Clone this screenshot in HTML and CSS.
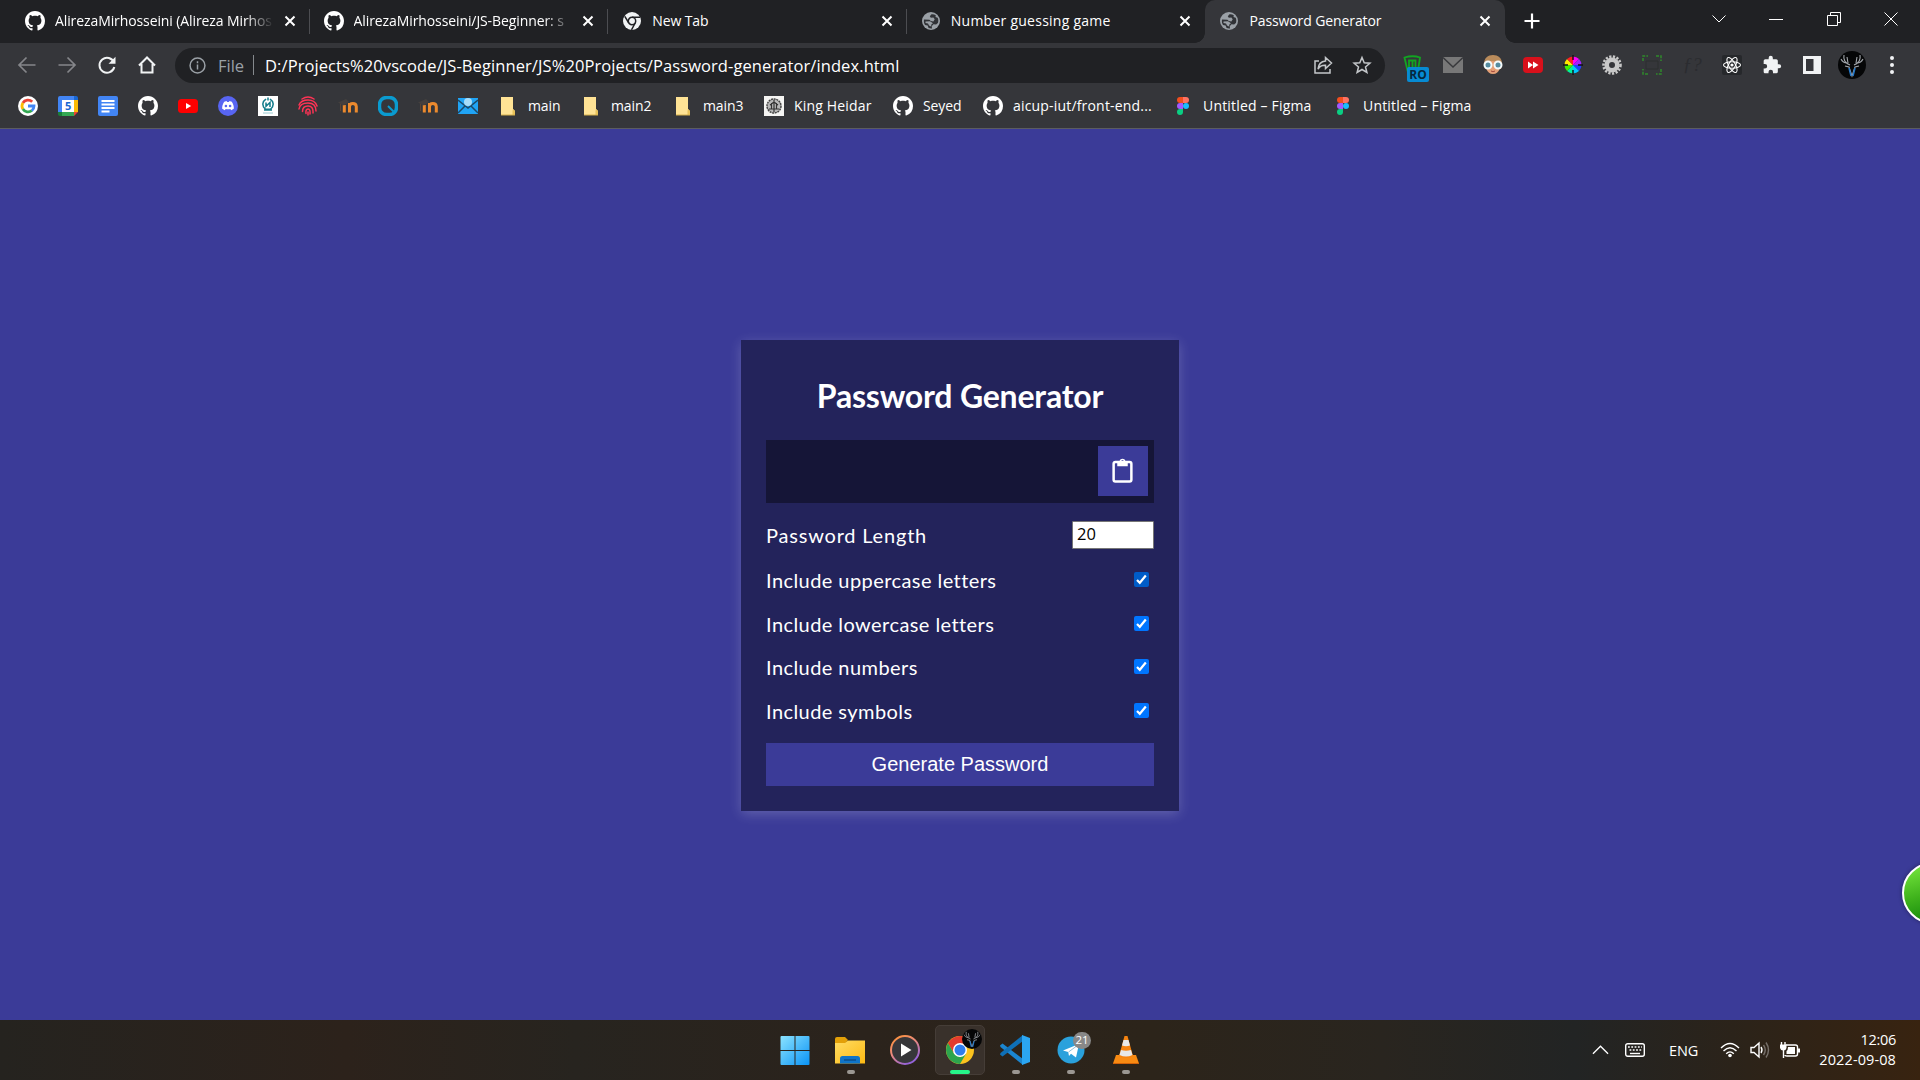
FILE: index.html
```html
<!DOCTYPE html>
<html lang="en">
<head>
<meta charset="utf-8">
<title>Password Generator</title>
<link rel="stylesheet" href="styles.css">
</head>
<body>
<svg class="sprite" width="0" height="0" aria-hidden="true">
  <symbol id="github" viewBox="0 0 16 16"><path fill="#fff" d="M8 0C3.58 0 0 3.58 0 8c0 3.54 2.29 6.53 5.47 7.59.4.07.55-.17.55-.38 0-.19-.01-.82-.01-1.49-2.01.37-2.53-.49-2.69-.94-.09-.23-.48-.94-.82-1.13-.28-.15-.68-.52-.01-.53.63-.01 1.08.58 1.23.82.72 1.21 1.87.87 2.33.66.07-.52.28-.87.51-1.07-1.78-.2-3.64-.89-3.64-3.95 0-.87.31-1.59.82-2.15-.08-.2-.36-1.02.08-2.12 0 0 .67-.21 2.2.82.64-.18 1.32-.27 2-.27s1.36.09 2 .27c1.53-1.04 2.2-.82 2.2-.82.44 1.1.16 1.92.08 2.12.51.56.82 1.27.82 2.15 0 3.07-1.87 3.75-3.65 3.95.29.25.54.73.54 1.48 0 1.07-.01 1.93-.01 2.2 0 .21.15.46.55.38A8.01 8.01 0 0 0 16 8c0-4.42-3.58-8-8-8z"/></symbol>
  <symbol id="globe" viewBox="0 0 18 18"><circle cx="9" cy="9" r="9" fill="#9aa0a6"/><path fill="#303236" d="M9.500 2.200 7.800 4.200l1 1.500 2.600-.3 1.300 1.800-1.300 2.300-2.600-.4-1.400-1.400L2 7.500c-.4 2 0 3.900 1 5.400l2.600.6 1 2.600c1 .4 2.300.5 3.400.4l-.3-2.300 1.800-2 2.600.3 1.800-1.500c.6-1.700.5-3.600-.2-5.200L13.500 5l.3-1.800C12.500 2.300 11 2 9.500 2.200z"/><path fill="#9aa0a6" d="M3.500 9.500 8 9.200l3 2-1.500 1-.5 2.300-2-1-1-2-2.500-.5z"/></symbol>
  <symbol id="close" viewBox="0 0 12 12"><path d="M1.500 1.500l9 9M10.500 1.500l-9 9" stroke="#fff" stroke-width="2" fill="none"/></symbol>
  <symbol id="folder" viewBox="0 0 20 20"><path fill="#ffe395" d="M3 1h12v12l2 2v4H3z"/><path d="M15 13l2 2v4h-2.500v-4z" fill="#e8c25a"/><path d="M3 19h14" stroke="#d6b04c"/></symbol>
  <symbol id="moodle" viewBox="0 0 20 20"><path d="M6.300 16.500V9M11.500 16.500V7M11.500 10.500q0-3 3.300-3t3.500 3v6" stroke="#ec8a2e" stroke-width="3" fill="none"/><path d="M0 6.500 8 3l3 3-5 3.500L2.500 8z" fill="#45403e"/><path d="M2.500 8v7" stroke="#5b4334"/></symbol>
  <symbol id="figma" viewBox="0 0 20 20"><path fill="#f24e1e" d="M10 1H7a3 3 0 0 0 0 6h3z"/><path fill="#ff7262" d="M10 1h3a3 3 0 0 1 0 6h-3z"/><path fill="#a259ff" d="M10 7H7a3 3 0 0 0 0 6h3z"/><circle cx="13" cy="10" r="3" fill="#1abcfe"/><path fill="#0acf83" d="M7 13h3v3a3 3 0 1 1-3-3z"/></symbol>
  <symbol id="deer" viewBox="0 0 28 28"><circle cx="14" cy="14" r="14" fill="#050607"/><g fill="none" stroke="#a4a8ad" stroke-width="1.100"><path d="M12 14C7 12 5 9 6 4M9 12C5 12 4 10 3 8M10 12 9 6M16 14c5-2 7-5 6-10M19 12c4 0 5-2 6-4M18 12l1-6M7 15l4 1 3 9 3-9 4-1"/></g><path d="M11 17l2 8M17 17l-2 8" stroke="#2378c9" stroke-width="1.500"/></symbol>
</svg>

<header class="browser">
  <div class="tabstrip">
    <div class="tab"><svg class="tab-icon"><use href="#github"/></svg><span class="tab-title fade">AlirezaMirhosseini (Alireza Mirhos</span><svg class="tab-close"><use href="#close"/></svg></div>
    <div class="tab"><svg class="tab-icon"><use href="#github"/></svg><span class="tab-title fade">AlirezaMirhosseini/JS-Beginner: s</span><svg class="tab-close"><use href="#close"/></svg></div>
    <div class="tab"><svg class="tab-icon" viewBox="-1 -1 20 20"><circle cx="9" cy="9" r="9" fill="#f1f3f4"/><circle cx="9" cy="9" r="3.700" fill="none" stroke="#202124" stroke-width="1.500"/><path d="M9 5.200h8M5.800 11 1.800 4.300M12.200 11 8.500 17.800" stroke="#202124" stroke-width="1.500"/></svg><span class="tab-title">New Tab</span><svg class="tab-close"><use href="#close"/></svg></div>
    <div class="tab last"><svg class="tab-icon globe"><use href="#globe"/></svg><span class="tab-title loose">Number guessing game</span><svg class="tab-close"><use href="#close"/></svg></div>
    <div class="tab active"><svg class="tab-icon globe"><use href="#globe"/></svg><span class="tab-title">Password Generator</span><svg class="tab-close"><use href="#close"/></svg></div>
    <svg class="new-tab" viewBox="0 0 16 16"><path d="M8 .5v15M.5 8h15" stroke="#fff" stroke-width="2.200"/></svg>
    <div class="window-buttons">
      <svg viewBox="0 0 14 14"><path d="M.5 3.500 7 10l6.500-6.500"/></svg>
      <svg viewBox="0 0 14 14"><path d="M0 7.500h14"/></svg>
      <svg viewBox="0 0 14 14"><path d="M.5 3.500h10v10H.5zM3.500 3.500v-3h10v10h-3"/></svg>
      <svg viewBox="0 0 14 14"><path d="M.5.500l13 13M13.500.500l-13 13"/></svg>
    </div>
  </div>

  <div class="toolbar">
    <div class="nav">
      <svg class="dim" viewBox="0 0 20 20"><path d="M18.500 10H2.500M9.500 2.500 2 10l7.500 7.500"/></svg>
      <svg class="dim" viewBox="0 0 20 20"><path d="M1.500 10h16M10.500 2.500 18 10l-7.500 7.500"/></svg>
      <svg viewBox="0 0 20 20"><path d="M17 7.500A7.500 7.500 0 1 0 17.300 12"/><path d="M18.500 1.800v7h-7z" fill="#f1f3f4" stroke="none"/></svg>
      <svg viewBox="0 0 20 20"><path d="M2 10.500 10 2.500l8 8M4.500 9v8.500h11V9"/></svg>
    </div>
    <div class="omnibox">
      <svg class="info" viewBox="0 0 16 16"><circle cx="8" cy="8" r="7"/><path d="M8 7v4.800M8 4v1.800"/></svg>
      <span class="scheme">File</span><i class="bar"></i>
      <span class="url">D:/Projects%20vscode/JS-Beginner/JS%20Projects/Password-generator/index.html</span>
      <svg class="action" viewBox="0 0 20 20"><path d="M6 6H2v12h15v-4M12.500 2.500l6 5.500-6 5.500v-3.300C8.500 10 6.500 11.500 5 14c.4-4.500 3-7.500 7.500-8z"/></svg>
      <svg class="action star" viewBox="0 0 20 20"><path d="M10 2.500l2.200 5.300 5.700.4-4.400 3.700 1.400 5.600L10 14.500l-4.900 3 1.400-5.600L2.100 8.200l5.700-.4z"/></svg>
    </div>
    <div class="extensions">
      <span class="ext badge-host"><svg viewBox="0 0 20 20"><path d="M1.500 2.500Q10 0 17 2.500l-2 13H4.500zM6 13V5.500h6.500V13M9.500 6v6" fill="none" stroke="#12a522" stroke-width="1.800"/></svg><b class="badge">RO</b></span>
      <span class="ext"><svg viewBox="0 0 20 20"><path fill="#787878" d="M0 2h20v16H0z"/><path d="M0 2.500 10 12 20 2.500" fill="none" stroke="#38393c" stroke-width="1.500"/></svg></span>
      <span class="ext"><svg viewBox="0 0 20 20"><path d="M1 9C1 3 5 0 10 0s9 3 9 9l-1 5H2z" fill="#b98b5b"/><path d="M3 8q5-4 14 0v5q-2 6-7 6t-7-6z" fill="#e5a077"/><path d="M8 16q2 1.500 4 0" stroke="#a2483c" fill="none"/><g fill="#558ca0" stroke="#f4fbfd" stroke-width="2"><circle cx="5" cy="10" r="3.500"/><circle cx="15" cy="10" r="3.500"/></g></svg></span>
      <span class="ext"><svg viewBox="0 0 20 20"><rect y="2" width="20" height="16" rx="4" fill="#d8101b"/><path fill="#fff" d="M5 6.500l5 3.500-5 3.500zM10 6.500l5.500 3.500-5.500 3.500z"/></svg></span>
      <span class="ext"><svg viewBox="0 0 20 20"><path d="M10 10V1.500A8.500 8.500 0 0 1 16 4z" fill="#f0f"/><path d="M10 10l6-6a8.500 8.500 0 0 1 2.500 6z" fill="#a020ff"/><path d="M10 10h8.500A8.500 8.500 0 0 1 16 16z" fill="#2040ff"/><path d="M10 10l6 6a8.500 8.500 0 0 1-6 2.500z" fill="#00c8ff"/><path d="M10 10v8.500A8.500 8.500 0 0 1 4 16z" fill="#00f0a0"/><path d="M10 10l-6 6a8.500 8.500 0 0 1-2.500-6z" fill="#40f000"/><path d="M10 10H1.500A8.500 8.500 0 0 1 4 4z" fill="#ffe800"/><path d="M10 10L4 4a8.500 8.500 0 0 1 6-2.500z" fill="#ff2020"/><path d="M10 0v5M10 15v5M0 10h5M15 10h5" stroke="#111" stroke-width="1.400"/></svg></span>
      <span class="ext"><svg viewBox="0 0 20 20"><circle cx="10" cy="10" r="8.500" fill="none" stroke="#c8c8c8" stroke-width="2.600" stroke-dasharray="2.200 1.500"/><circle cx="10" cy="10" r="5.300" fill="none" stroke="#c8c8c8" stroke-width="4.600"/></svg></span>
      <span class="ext"><svg viewBox="0 0 20 20"><path d="M1 6V1h5M14 1h5v5M19 14v5h-5M6 19H1v-5" fill="none" stroke="#2f8a2b" stroke-width="1.500" stroke-dasharray="3 1.200"/><path d="M4 6h12v8H4z" fill="none" stroke="#2c2e2f"/></svg></span>
      <span class="ext faint">ƒ?</span>
      <span class="ext"><svg viewBox="0 0 20 20"><rect width="20" height="20" rx="2" fill="#26282b"/><g fill="none" stroke="#fff" stroke-width="1.100"><ellipse cx="10" cy="10" rx="8.500" ry="3.300"/><ellipse cx="10" cy="10" rx="8.500" ry="3.300" transform="rotate(60 10 10)"/><ellipse cx="10" cy="10" rx="8.500" ry="3.300" transform="rotate(120 10 10)"/></g><circle cx="10" cy="10" r="1.600" fill="#fff"/></svg></span>
      <span class="ext"><svg viewBox="0 0 24 24"><path fill="#f1f3f4" d="M20.500 11H19V7a2 2 0 0 0-2-2h-4V3.500a2.500 2.500 0 0 0-5 0V5H4a2 2 0 0 0-2 2v3.800h1.500a2.700 2.700 0 0 1 0 5.400H2V20c0 1.100.9 2 2 2h3.800v-1.500a2.700 2.700 0 0 1 5.400 0V22H17a2 2 0 0 0 2-2v-4h1.500a2.500 2.500 0 0 0 0-5z"/></svg></span>
      <span class="ext"><svg viewBox="0 0 20 20"><path fill="#f1f3f4" fill-rule="evenodd" d="M1 1h18v18H1zM4 4v12h7.500V4z"/></svg></span>
      <span class="ext"><svg class="avatar"><use href="#deer"/></svg></span>
      <span class="ext"><svg viewBox="0 0 20 20" fill="#f1f3f4"><circle cx="10" cy="3" r="2"/><circle cx="10" cy="10" r="2"/><circle cx="10" cy="17" r="2"/></svg></span>
    </div>
  </div>

  <nav class="bookmarks">
    <a class="mark"><svg viewBox="0 0 20 20"><circle cx="10" cy="10" r="10" fill="#fff"/><g fill="none" stroke-width="2.800"><path stroke="#ea4335" d="M4.800 7A6 6 0 0 1 14.200 5.800"/><path stroke="#fbbc05" d="M4.900 6.900a6 6 0 0 0 0 6.200"/><path stroke="#34a853" d="M4.900 13a6 6 0 0 0 9 1.500"/><path stroke="#4285f4" d="M10 10h6q0 3-2.200 4.600"/></g></svg></a>
    <a class="mark"><svg viewBox="0 0 20 20"><path fill="#4285f4" d="M0 2q0-2 2-2h14v4H4v12H0z"/><path fill="#1967d2" d="M16 0h2q2 0 2 2v2h-4z"/><path fill="#fbbc04" d="M16 4h4v12h-4z"/><path fill="#34a853" d="M4 16h12v4H4z"/><path fill="#188038" d="M0 16h4v4H2q-2 0-2-2z"/><path fill="#fff" d="M4 4h12v12H4z"/><path fill="#ea4335" d="M16 16h4l-4 4z"/><text x="10" y="14" class="cal-day">5</text></svg></a>
    <a class="mark"><svg viewBox="0 0 20 20"><rect width="20" height="20" rx="2" fill="#4285f4"/><path d="M3.500 5h13M3.500 8.500h13M3.500 12h13M3.500 15.500h8" stroke="#fff" stroke-width="1.800"/></svg></a>
    <a class="mark"><svg><use href="#github"/></svg></a>
    <a class="mark"><svg viewBox="0 0 20 20"><rect y="3" width="20" height="14" rx="3.500" fill="#f00"/><path fill="#fff" d="M8 7l5.200 3L8 13z"/></svg></a>
    <a class="mark"><svg viewBox="0 0 20 20"><circle cx="10" cy="10" r="10" fill="#5865f2"/><path fill="#fff" d="M6.200 5.800 8.600 5l.5.900h1.800l.5-.9 2.400.8c1.500 2.200 2.200 4.500 2 7l-2.600 1.400-.9-1.300q-2.300.6-4.600 0l-.9 1.300-2.600-1.400c-.2-2.500.5-4.800 2-7z"/><circle cx="7.900" cy="10" r="1.300" fill="#5865f2"/><circle cx="12.100" cy="10" r="1.300" fill="#5865f2"/></svg></a>
    <a class="mark"><svg viewBox="0 0 20 20"><path fill="#fff" d="M0 0h20v20H0z"/><path d="M10 1.500v3M8 3 5.500 5.500 4.800 8l.7 3L7.500 13.200h5L14.500 11l.7-3-.7-2.500L12 3M8 6.500v3.700l4-3.700v4.500M6 14h8" fill="none" stroke="#137c8b" stroke-width="1.500"/><path d="M5 17h10" stroke="#9ccbd2"/></svg></a>
    <a class="mark"><svg viewBox="0 0 20 20"><g fill="none" stroke="#ff3355" stroke-width="1.500" stroke-linecap="round"><path d="M4 3q6-4 12 0M1 9q2-5 9-5t9 6M1 13q1-6 9-6t8 8M4.500 15.500q0-5.500 5.500-5.500t5 7M8 17.500q-.5-4.500 2-4.500t2 5M10 16v3"/></g></svg></a>
    <a class="mark"><svg><use href="#moodle"/></svg></a>
    <a class="mark"><svg viewBox="0 0 20 20"><rect x="1.500" y="1.500" width="17" height="17" rx="7" fill="none" stroke="#0a9bd0" stroke-width="3.500"/><path d="M10 10l5.500 5.500" stroke="#0a9bd0" stroke-width="2"/></svg></a>
    <a class="mark"><svg><use href="#moodle"/></svg></a>
    <a class="mark"><svg viewBox="0 0 20 20"><path fill="#20a4f5" d="M0 2h20v16H0z"/><path d="M0 4l10 8 10-8M0 17l7-7M20 17l-7-7" fill="none" stroke="#1c4968" stroke-width="1.500"/><circle cx="10" cy="6" r="4" fill="#a8dcf8"/></svg></a>
    <a class="mark w83"><svg><use href="#folder"/></svg><span>main</span></a>
    <a class="mark w92"><svg><use href="#folder"/></svg><span>main2</span></a>
    <a class="mark w91"><svg><use href="#folder"/></svg><span>main3</span></a>
    <a class="mark w129 loose"><svg viewBox="0 0 20 20"><path fill="#f5f5f3" d="M0 0h20v20H0z"/><circle cx="10" cy="10" r="7" fill="#b8b8b8" stroke="#444" stroke-width="1.500" stroke-dasharray="2 .7"/><path d="M10 4v12M7.500 7v6M12.500 7v6M5 13h10M6 9l4-3 4 3" stroke="#333" stroke-width="1.200" fill="none"/></svg><span>King Heidar</span></a>
    <a class="mark w90"><svg><use href="#github"/></svg><span>Seyed</span></a>
    <a class="mark w190 loose"><svg><use href="#github"/></svg><span>aicup-iut/front-end...</span></a>
    <a class="mark w160 loose"><svg><use href="#figma"/></svg><span>Untitled – Figma</span></a>
    <a class="mark w160 loose"><svg><use href="#figma"/></svg><span>Untitled – Figma</span></a>
  </nav>
</header>

<main class="page">
  <section class="card">
    <h2>Password Generator</h2>
    <div class="result"><button class="copy"><svg viewBox="0 0 22 28"><path d="M3.500 5h15q1.800 0 1.800 1.800v17q0 1.800-1.800 1.800h-15q-1.800 0-1.800-1.800v-17Q1.700 5 3.500 5z" fill="none" stroke="#fff" stroke-width="2.600"/><path fill="#fff" fill-rule="evenodd" d="M5.500 4h2.400a3.200 3.200 0 0 1 6.200 0h2.400v5.500h-11zM11 3a1.200 1.200 0 1 0 0 2.400A1.200 1.200 0 0 0 11 3z"/></svg></button></div>
    <div class="setting first"><label>Password Length</label><input class="length" type="text" value="20"></div>
    <div class="setting"><label>Include uppercase letters</label><i class="check hover"><svg viewBox="0 0 15 15"><path d="M3 8l2.800 2.800 6-7.300"/></svg></i></div>
    <div class="setting"><label>Include lowercase letters</label><i class="check"><svg viewBox="0 0 15 15"><path d="M3 8l2.800 2.800 6-7.300"/></svg></i></div>
    <div class="setting"><label>Include numbers</label><i class="check"><svg viewBox="0 0 15 15"><path d="M3 8l2.800 2.800 6-7.300"/></svg></i></div>
    <div class="setting"><label>Include symbols</label><i class="check"><svg viewBox="0 0 15 15"><path d="M3 8l2.800 2.800 6-7.300"/></svg></i></div>
    <button class="generate">Generate Password</button>
  </section>
  <div class="orb"></div>
</main>

<footer class="taskbar">
  <div class="apps">
    <span class="app"><svg viewBox="0 0 30 30"><defs><linearGradient id="win" x2="1" y2="1"><stop stop-color="#8be3ff"/><stop offset="1" stop-color="#0a93f5"/></linearGradient></defs><path fill="url(#win)" d="M.5 2q0-1 1-1H14.500v14H.5zM15.500 1h13q1 0 1 1v13h-14zM.5 16h14v14h-13q-1 0-1-1zM15.500 16h14v13q0 1-1 1h-13z"/></svg></span>
    <span class="app run"><svg viewBox="0 0 30 30"><defs><linearGradient id="fold" x2="1" y2="1"><stop stop-color="#ffdc63"/><stop offset="1" stop-color="#fcb913"/></linearGradient></defs><path fill="#e3a008" d="M0 4q0-2 2-2h8l3 3-3 4H0z"/><path fill="url(#fold)" d="M0 8h10l3-2.500h17V28.500H0z"/><path fill="#0f74c8" d="M5 28.500v-5q0-2.500 2.500-2.500h15q2.500 0 2.500 2.500v5z"/><path d="M9 25h12" stroke="#0b4e8c" stroke-width="1.500"/></svg></span>
    <span class="app"><svg viewBox="0 0 30 30"><defs><linearGradient id="ring" x2=".6" y2="1"><stop stop-color="#ff9330"/><stop offset=".5" stop-color="#eb8a7d"/><stop offset="1" stop-color="#9462d8"/></linearGradient></defs><circle cx="15" cy="15" r="14" fill="#37373a" stroke="url(#ring)" stroke-width="2"/><path fill="#fff" d="M11 8.500 21.500 15 11 21.500z"/></svg></span>
    <span class="app current"><svg viewBox="0 0 30 30"><circle cx="15" cy="15" r="14" fill="#fcc31e"/><path fill="#e33b2e" d="M2.900 8A14 14 0 0 1 27.100 8L15 9 9 18.500z"/><path fill="#2da44e" d="M2.900 8A14 14 0 0 0 15 29l6.200-10.500L15 22l-6-3.500z"/><circle cx="15" cy="15" r="7" fill="#fff"/><circle cx="15" cy="15" r="5.500" fill="#2f7ded"/></svg><svg class="app-badge"><use href="#deer"/></svg></span>
    <span class="app run"><svg viewBox="0 0 30 30"><path fill="#1b86d1" d="M0 10.500 2.500 8.500 23 24v6L.5 12z"/><path fill="#0f70b7" d="M0 19.500 2.500 21.500 23 6V0L.5 18z"/><path fill="#2ba6f2" d="M22 0l8 3v24l-8 3z"/></svg></span>
    <span class="app run"><svg viewBox="0 0 30 30"><circle cx="15" cy="15" r="13.500" fill="#2aa1dc"/><path fill="#fff" d="M7 15.500 23 9l-3 13.500-5-3.700-2 2.200-.8-4z"/><path d="M12.500 17 20 11.500" stroke="#8ebfdb"/></svg><b class="count">21</b></span>
    <span class="app run"><svg viewBox="0 0 30 30"><path fill="#f88a12" d="M5 20h20l3 8.500H2z"/><path fill="#f58310" d="M13.500 1h3L22 21q-7 4-14 0z"/><path fill="#e8e8e8" d="M12.500 5h5L19 10.500q-4 1.500-8 0zM10 15q5 1.500 10 0l1.500 5q-6.500 3-13 0z"/><path d="M2 28.500h26" stroke="#d26108"/></svg></span>
  </div>
  <div class="tray">
    <svg class="t-up" viewBox="0 0 18 10"><path d="M1 9l8-8 8 8"/></svg>
    <svg class="t-key" viewBox="0 0 20 14"><rect x=".7" y=".7" width="18.600" height="12.600" rx="2"/><path d="M3 4h14M4.500 7h12" stroke-dasharray="1.800 1.500"/><path d="M5 10.500h10"/></svg>
    <span class="lang">ENG</span>
    <svg class="t-wifi" viewBox="0 0 20 16"><path d="M1 6q9-9 18 0M3.500 9q6.500-6.500 13 0M6.200 11.800q3.800-3.800 7.600 0"/><circle cx="10" cy="13.500" r="1.800" fill="#fff" stroke="none"/></svg>
    <svg class="t-vol" viewBox="0 0 20 18"><path d="M1 6.500h3l5-4.500v14l-5-4.500H1zM11 6q2 3 0 6"/><path d="M13.500 4q3.500 5 0 10M16 1.500q5 7.500 0 15" stroke="#77706a"/></svg>
    <svg class="t-bat" viewBox="0 0 20 16"><path d="M6 3h9.500q2 0 2 2v7q0 2-2 2H7q-2 0-2-1M3.500 8v8M1.500 0v3M5 0v3"/><path fill="#fff" stroke="none" d="M0 2.500h6.500V6Q6 8.500 3.300 8.500T0 6zM8 5h7v7H6.500V9Q8 8 8 5zM18 6.500h2v4h-2z"/></svg>
    <div class="clock"><span>12:06</span><span class="date">2022-09-08</span></div>
  </div>
</footer>
</body>
</html>
```
FILE: styles.css
```css
* { box-sizing: border-box; }
body {
  margin: 0;
  width: 1920px;
  height: 1080px;
  overflow: hidden;
  display: flex;
  flex-direction: column;
  font-family: "Open Sans", "Noto Sans", sans-serif;
  color: #fff;
}
svg { display: block; flex: none; }
.sprite { position: absolute; }

/* Browser chrome */
.browser { height: 129px; background: #35363a; border-bottom: 1px solid #5b5c60; flex: none; }
.tabstrip { height: 43px; background: #202124; display: flex; align-items: center; padding-left: 11px; }
.tab {
  width: 298.600px;
  height: 43px;
  display: flex;
  align-items: center;
  padding: 0 14px 1px;
  position: relative;
  font-size: 14px;
  letter-spacing: -.1px;
}
.tab:not(.last):not(.active)::after {
  content: "";
  position: absolute;
  right: 0;
  top: 9px;
  width: 1px;
  height: 25px;
  background: #4c4d51;
}
.tab-icon { width: 20px; height: 20px; }
.tab-icon.globe { width: 18px; height: 18px; margin: 0 1px; }
.tab-title { flex: 1; min-width: 0; margin-left: 10px; padding-bottom: 2px; white-space: nowrap; }
.fade { -webkit-mask-image: linear-gradient(90deg, #000 190px, transparent 219px); mask-image: linear-gradient(90deg, #000 190px, transparent 219px); }
.tab-title.loose { letter-spacing: .25px; }
.tab-close { width: 12px; height: 12px; }
.tab.active { width: 300px; background: #35363a; border-radius: 10px 10px 0 0; }
.tab.active::before, .tab.active::after {
  content: "";
  position: absolute;
  bottom: 0;
  width: 10px;
  height: 10px;
}
.tab.active::before { left: -10px; background: radial-gradient(circle at 0 0, transparent 9.500px, #35363a 10px); }
.tab.active::after { right: -10px; background: radial-gradient(circle at 100% 0, transparent 9.500px, #35363a 10px); }
.new-tab { width: 16px; height: 16px; margin: 0 0 1px 19px; }
.window-buttons { margin: 0 22px 6px auto; display: flex; gap: 43.500px; }
.window-buttons svg { width: 14px; height: 14px; fill: none; stroke: #fff; stroke-width: 1; }

.toolbar { height: 45px; display: flex; align-items: center; padding-bottom: 1px; }
.nav { width: 175px; padding-left: 17px; display: flex; gap: 20px; }
.nav svg { width: 20px; height: 20px; fill: none; stroke: #f1f3f4; stroke-width: 2; }
.nav svg.dim { stroke: #85868a; stroke-width: 1.700; }
.omnibox {
  width: 1210px;
  height: 35px;
  border-radius: 18px;
  background: #202124;
  display: flex;
  align-items: center;
  padding: 0 13px 0 14px;
  font-size: 16.500px;
}
.info { width: 17px; height: 17px; fill: none; stroke: #9aa0a6; stroke-width: 1.400; }
.scheme { color: #9aa0a6; margin-left: 12px; width: 35px; }
.bar { width: 1px; height: 20px; background: #85898d; }
.url { flex: 1; margin-left: 11px; white-space: nowrap; letter-spacing: .09px; }
.action { width: 20px; height: 20px; fill: none; stroke: #c4c7ca; stroke-width: 1.500; }
.star { margin-left: 19px; }
.extensions { display: flex; padding-left: 8px; }
.ext { width: 39.900px; height: 36px; display: flex; align-items: center; justify-content: center; }
.ext svg { width: 20px; height: 20px; }
.ext svg.avatar { width: 28px; height: 28px; }
.badge-host { position: relative; }
.badge {
  position: absolute;
  left: 14px;
  top: 20px;
  width: 22px;
  height: 15px;
  border-radius: 2px;
  background: #078bd3;
  color: #06283d;
  font-size: 12px;
  line-height: 15px;
  text-align: center;
}
.faint { color: #2b2c30; font: italic 19px "Liberation Serif", serif; }

.bookmarks { height: 40px; display: flex; align-items: center; padding: 0 0 4px 18px; font-size: 14px; }
.mark { width: 40px; display: flex; align-items: center; gap: 10px; white-space: nowrap; flex: none; letter-spacing: -.1px; }
.mark span { padding-bottom: 2px; }
.mark.loose { letter-spacing: .18px; }
.mark svg { width: 20px; height: 20px; }
.cal-day { font: bold 11px "Open Sans", sans-serif; fill: #1967d2; text-anchor: middle; }
.w83 { width: 83px; }
.w90 { width: 90px; }
.w91 { width: 91px; }
.w92 { width: 92px; }
.w129 { width: 129px; }
.w160 { width: 160px; }
.w190 { width: 190px; }

/* Page */
.page {
  height: 891px;
  flex: none;
  background: #3b3b98;
  display: flex;
  align-items: center;
  justify-content: center;
  position: relative;
  overflow: hidden;
}
.card {
  width: 438px;
  height: 471px;
  margin-top: 2px;
  padding: 25px;
  background: #23235b;
  box-shadow: 0 2.500px 12px rgba(255, 255, 255, .2);
  font-family: Lato, sans-serif;
}
.card h2 { margin: 11px 0 25px; height: 39px; line-height: 39px; font-size: 32px; text-align: center; letter-spacing: -.2px; }
.result { height: 63px; background: #151537; display: flex; align-items: center; justify-content: flex-end; padding: 0 6px 1px 0; }
.copy { width: 50px; height: 50px; border: 0; padding: 0 1px 1px 0; background: #3b3b98; display: flex; align-items: center; justify-content: center; }
.copy svg { width: 21px; height: 27px; }
.setting { height: 43.600px; display: flex; align-items: center; justify-content: space-between; font-size: 20px; }
.setting label { padding-bottom: 0; padding-top: 1px; letter-spacing: .43px; }
.setting.first { height: 55px; padding-top: 9px; }
.setting.first label { padding: 0; letter-spacing: .8px; }
.length { width: 82px; height: 28px; padding: 0 4px 3px; border: 1px solid #767676; border-radius: 1px; background: #fff; color: #000; font: 16.500px "Open Sans", sans-serif; }
.check { width: 15px; height: 15px; margin-right: 5px; border-radius: 2px; background: #0075ff; }
.check.hover { background: #005cc8; }
.check svg { width: 15px; height: 15px; fill: none; stroke: #fff; stroke-width: 2.200; }
.generate { width: 388px; height: 43px; margin-top: 10.600px; border: 0; padding: 0; background: #3b3b98; color: #fff; font: 20px "Liberation Sans", Arial, sans-serif; display: block; }
.orb {
  position: absolute;
  left: 1902px;
  top: 733px;
  width: 62px;
  height: 62px;
  border: 2px solid #fff;
  border-radius: 50%;
  background: linear-gradient(165deg, #6fe03a 10%, #3fb21c 50%, #12870b 90%);
  box-shadow: 0 0 4px rgba(0, 0, 0, .4);
}

/* Taskbar */
.taskbar {
  height: 60px;
  flex: none;
  display: flex;
  align-items: center;
  justify-content: flex-end;
  position: relative;
  background: linear-gradient(90deg, #25231f, #2c221b 18%, #27241f 30%, #2b231c 45%, #2c241a 60%, #29251f 72%, #222424 82%, #2c2319 91%, #382310);
}
.apps { position: absolute; left: 767.500px; top: 5px; display: flex; }
.app { width: 55.100px; height: 50px; display: flex; align-items: center; justify-content: center; position: relative; }
.app > svg { width: 30px; height: 30px; }
.app.run::after, .app.current::after {
  content: "";
  position: absolute;
  bottom: 1px;
  left: 24px;
  width: 8px;
  height: 4px;
  border-radius: 2px;
  background: #9b9792;
}
.app.current::before {
  content: "";
  position: absolute;
  inset: 0 2.500px;
  border-radius: 5px;
  border: 1px solid #453d37;
  background: #39312b;
}
.app.current svg { position: relative; }
.app.current::after { left: 17.500px; width: 20px; background: #26f589; }
.app.current .app-badge { position: absolute; left: 29px; top: 4px; width: 20px; height: 20px; }
.count {
  position: absolute;
  left: 30px;
  top: 7px;
  width: 18px;
  height: 17px;
  border-radius: 9px;
  background: #888;
  font: 11.500px/16px "Open Sans", sans-serif;
  text-align: center;
}
.tray { display: flex; align-items: center; padding-right: 24px; }
.tray svg { fill: none; stroke: #fff; stroke-width: 1.400; }
.t-up { width: 17px; height: 10px; }
.t-key { width: 20px; height: 14px; margin-left: 16px; }
.lang { width: 28px; margin-left: 24px; font-size: 14.500px; letter-spacing: -.1px; }
.t-wifi { width: 20px; height: 16px; margin-left: 23px; }
.t-vol { width: 20px; height: 18px; margin-left: 10px; }
.t-bat { width: 20px; height: 16px; margin-left: 10px; }
.clock { width: 96px; display: flex; flex-direction: column; align-items: flex-end; font-size: 14.500px; line-height: 20px; letter-spacing: -.3px; white-space: nowrap; }
.date { letter-spacing: .1px; }
```
